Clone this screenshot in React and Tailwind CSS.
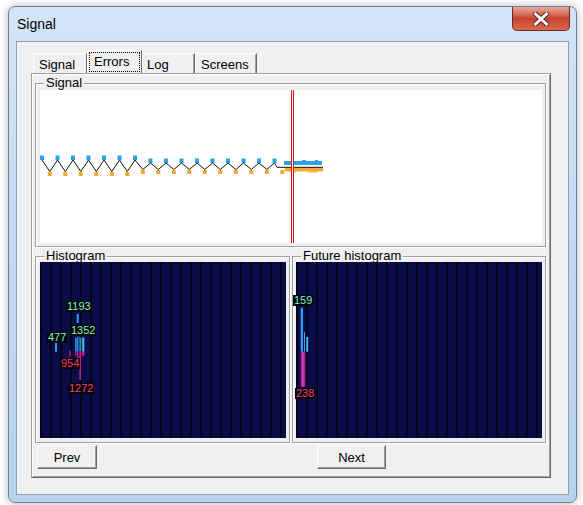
import React from 'react';

const peaks = Array.from({ length: 16 }, (_, i) => ({ x: 2 + i * 15.5, y: i <= 6 ? 70 : 73 }));
const troughs = Array.from({ length: 16 }, (_, i) => ({ x: 9.8 + i * 15.5, y: i <= 5 ? 81.5 : 79.5 }));

const linePoints = () => {
  const pts = [];
  for (let i = 0; i < 15; i++) {
    pts.push(`${peaks[i].x},${peaks[i].y}`);
    pts.push(`${troughs[i].x},${troughs[i].y}`);
  }
  pts.push(`${peaks[15].x},${peaks[15].y}`);
  pts.push('237,77.3');
  pts.push('283,77.3');
  return pts.join(' ');
};

const SignalChart = () => (
  <svg width="502" height="153" className="block">
    {peaks.map((p, i) => (
      <rect key={`b${i}`} x={p.x - 2} y={p.y - 4.5} width="4" height="4.5" fill="#29a3e6" />
    ))}
    {troughs.map((t, i) => (
      <rect key={`o${i}`} x={t.x - 2} y={t.y + 0.5} width="4" height="4" fill="#f5a82a" />
    ))}
    <rect x="244" y="71" width="38" height="4" fill="#29a3e6" />
    <rect x="262" y="70" width="4" height="1" fill="#29a3e6" />
    <rect x="275" y="70" width="3" height="1" fill="#29a3e6" />
    <rect x="245" y="77.5" width="38" height="4" fill="#f5a82a" />
    <rect x="250" y="81.5" width="6" height="1" fill="#f5a82a" />
    <rect x="268" y="81.5" width="9" height="1" fill="#f5a82a" />
    <polyline points={linePoints()} fill="none" stroke="#111" strokeWidth="1" />
    <rect x="251" y="0" width="1" height="153" fill="#d41c1c" />
    <rect x="252" y="0" width="1" height="153" fill="#fbe8e8" />
    <rect x="253" y="0" width="1" height="153" fill="#d41c1c" />
  </svg>
);

const Label = ({ x, y, text, color }) => (
  <span
    className="absolute bg-[#000808] px-[1px] text-[11px] leading-[11px]"
    style={{ left: x, top: y, color }}
  >
    {text}
  </span>
);

const stripes =
  'bg-[repeating-linear-gradient(90deg,#02021a_0px,#02021a_2px,#0b0b48_2px,#0b0b48_10px)]';

const GroupBox = ({ title, className, children }) => (
  <div
    className={`relative border border-[#a0a0a0] shadow-[inset_1px_1px_0_#fff,1px_1px_0_#fff] ${className}`}
  >
    <span className="absolute left-[8px] top-[-9px] bg-[#f0f0f0] px-[2px] text-[13px] leading-[15px] text-black">
      {title}
    </span>
    {children}
  </div>
);

const Button = ({ label, className }) => (
  <button
    className={`h-[24px] border border-white border-r-[#696969] border-b-[#696969] bg-[#f0f0f0] text-[13px] leading-[15px] text-black shadow-[inset_-1px_-1px_0_#a0a0a0] ${className}`}
  >
    {label}
  </button>
);

export default function App() {
  return (
    <div className="w-[583px] h-[505px] bg-white overflow-hidden font-['Liberation_Sans',Arial,sans-serif] pt-[6px] pl-[8px]">
      <div className="w-[569px] h-[497px] rounded-[7px] border border-[#6b7f97] bg-gradient-to-b from-[#d3e5f7] via-[#c2d9f0] to-[#b8d2ec] shadow-[0_0_8px_rgba(0,0,0,0.3)] flex flex-col">
        <div className="h-[34px] flex items-start justify-between">
          <span className="pl-[8px] pt-[9px] text-[14px] leading-[16px] text-black">Signal</span>
          <div className="mr-[6px] w-[58px] h-[24px] rounded-b-[5px] border border-t-0 border-[#6e2a22] bg-gradient-to-b from-[#e9a99c] via-[#c8432f] to-[#d86a4d] flex items-center justify-center">
            <svg width="16" height="14" viewBox="0 0 16 14">
              <path d="M2.5 2 L13.5 12 M13.5 2 L2.5 12" stroke="#4a1f1a" strokeWidth="5" strokeLinecap="square" />
              <path d="M2.5 2 L13.5 12 M13.5 2 L2.5 12" stroke="#fff" strokeWidth="3" strokeLinecap="square" />
            </svg>
          </div>
        </div>
        <div className="ml-[7px] w-[553px] h-[454px] border border-[#8ea0b6] bg-[#f0f0f0] pl-[14px] pt-[8px]">
          <div className="ml-[2px] flex items-end h-[23px] text-[13px] leading-[15px] text-black">
            <div className="w-[54px] h-[20px] border-l border-t border-white border-r border-r-[#696969] rounded-tl-[2px] pl-[5px] pt-[3px]">
              Signal
            </div>
            <div className="w-[55px] h-[23px] border-l border-t border-white border-r border-r-[#696969] rounded-tl-[2px] p-[1px]">
              <div className="h-full border border-dotted border-black pl-[4px] pt-[1px]">Errors</div>
            </div>
            <div className="w-[53px] h-[20px] border-l border-t border-white border-r border-r-[#696969] shadow-[inset_-1px_0_0_#a0a0a0] pl-[4px] pt-[3px]">
              Log
            </div>
            <div className="w-[62px] h-[20px] border-l border-t border-white border-r border-r-[#696969] shadow-[inset_-1px_0_0_#a0a0a0] pl-[5px] pt-[3px]">
              Screens
            </div>
          </div>
          <div className="w-[520px] h-[405px] border border-[#a0a0a0] border-r-[#696969] border-b-[#696969] shadow-[inset_1px_1px_0_#fff,inset_-1px_-1px_0_#a0a0a0] pl-[3px] pt-[9px]">
            <GroupBox title="Signal" className="w-[511px] h-[164px] pl-[4px] pt-[6px]">
              <div className="w-[502px] h-[153px] bg-white">
                <SignalChart />
              </div>
            </GroupBox>
            <div className="mt-[9px] flex gap-[2px]">
              <GroupBox title="Histogram" className="w-[255px] h-[187px] pl-[4px] pt-[5px]">
                <div className={`relative w-[246px] h-[176px] ${stripes}`}>
                  <svg width="246" height="176" className="absolute inset-0">
                    <rect x="36.7" y="52" width="2" height="9" fill="#2aa4ee" />
                    <rect x="15" y="81" width="2" height="8.7" fill="#2aa4ee" />
                    <rect x="35.3" y="76" width="1.2" height="13.7" fill="#45c4f5" />
                    <rect x="37" y="74.7" width="1.2" height="15" fill="#1e8cff" />
                    <rect x="38.7" y="74.7" width="0.8" height="15" fill="#2aa4ee" />
                    <rect x="40.3" y="75.5" width="1" height="14.2" fill="#45c4f5" />
                    <rect x="42.3" y="75.5" width="2" height="14.2" fill="#45c4f5" />
                    <rect x="35.3" y="89.7" width="1.2" height="4" fill="#e0207a" />
                    <rect x="37" y="89.7" width="1.2" height="5" fill="#c81e88" />
                    <rect x="40.3" y="89.7" width="1" height="4" fill="#ff2a6d" />
                    <rect x="42.3" y="89.7" width="2" height="4" fill="#e0207a" />
                    <rect x="29.3" y="88.7" width="1.3" height="6" fill="#d8257a" />
                    <rect x="37.7" y="94" width="1.2" height="9" fill="#b0208f" />
                    <rect x="39.3" y="89.7" width="1.8" height="28.3" fill="#b0208f" />
                  </svg>
                  <Label x={26} y={39} text="1193" color="#86efc8" />
                  <Label x={7} y={70} text="477" color="#86efc8" />
                  <Label x={30} y={63} text="1352" color="#86efc8" />
                  <Label x={20} y={96} text="954" color="#ff2f6e" />
                  <Label x={28} y={121} text="1272" color="#ff3a78" />
                </div>
              </GroupBox>
              <GroupBox title="Future histogram" className="w-[254px] h-[187px] pl-[3px] pt-[5px]">
                <div className={`relative w-[246px] h-[176px] ${stripes}`}>
                  <svg width="246" height="176" className="absolute inset-0">
                    <rect x="4.7" y="45.7" width="2.3" height="44" fill="#2a9cf5" />
                    <rect x="8" y="69.7" width="0.8" height="20" fill="#45c4f5" />
                    <rect x="10.3" y="75" width="1.8" height="14.7" fill="#45c4f5" />
                    <rect x="4.7" y="89.7" width="4.6" height="35" fill="#b0208f" />
                    <rect x="6" y="89.7" width="1.5" height="35" fill="#d040b0" />
                  </svg>
                  <Label x={-3} y={33} text="159" color="#86efc8" />
                  <Label x={-1} y={126} text="238" color="#ff3a78" />
                </div>
              </GroupBox>
            </div>
            <div className="mt-[2px] flex pl-[2px]">
              <Button label="Prev" className="w-[60px]" />
              <Button label="Next" className="ml-[220px] w-[69px]" />
            </div>
          </div>
        </div>
      </div>
    </div>
  );
}
